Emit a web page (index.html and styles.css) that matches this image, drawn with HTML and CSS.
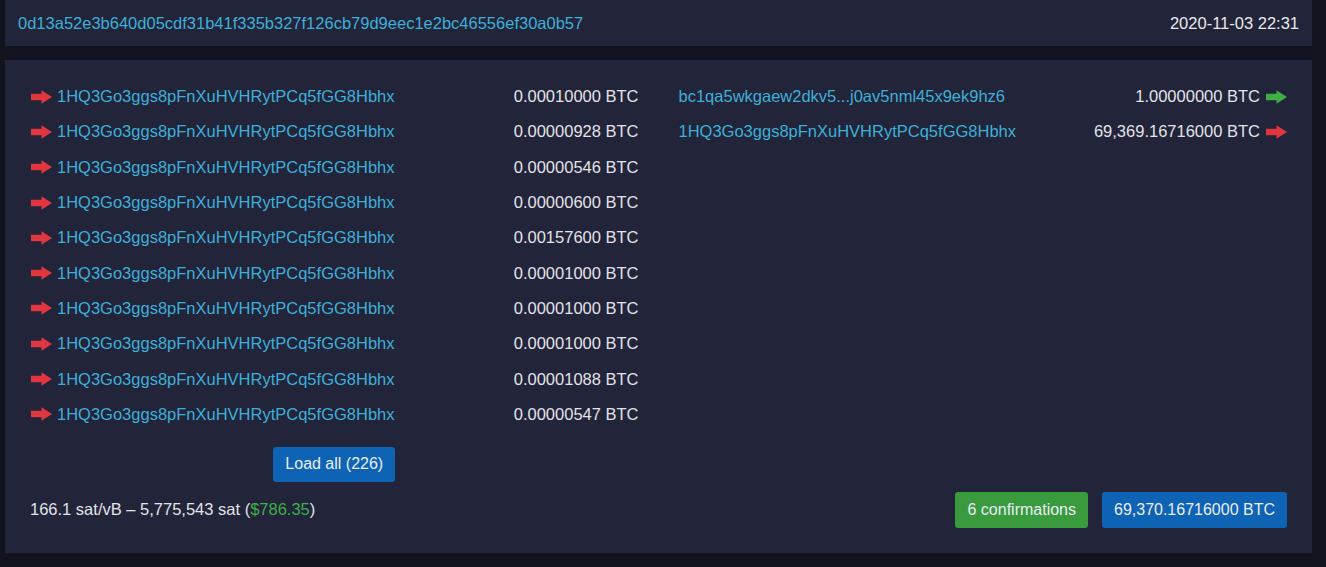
FILE: index.html
```html
<!DOCTYPE html>
<html>
<head>
  <link rel="stylesheet" href="styles.css">
</head>
<body>
  <div class="page">
    <div class="box header">
      <a class="link" href="#">0d13a52e3b640d05cdf31b41f335b327f126cb79d9eec1e2bc46556ef30a0b57</a>
      <span class="date">2020-11-03 22:31</span>
    </div>

    <div class="box tx">
      <div class="columns">
        <div class="col">
          <div class="row"><span class="addr"><svg class="arrow red" viewBox="0 0 22 14"><path d="M0 3.5h11V0l11 7-11 7v-3.5H0z"/></svg><a class="link" href="#">1HQ3Go3ggs8pFnXuHVHRytPCq5fGG8Hbhx</a></span><span class="amount">0.00010000 BTC</span></div>
          <div class="row"><span class="addr"><svg class="arrow red" viewBox="0 0 22 14"><path d="M0 3.5h11V0l11 7-11 7v-3.5H0z"/></svg><a class="link" href="#">1HQ3Go3ggs8pFnXuHVHRytPCq5fGG8Hbhx</a></span><span class="amount">0.00000928 BTC</span></div>
          <div class="row"><span class="addr"><svg class="arrow red" viewBox="0 0 22 14"><path d="M0 3.5h11V0l11 7-11 7v-3.5H0z"/></svg><a class="link" href="#">1HQ3Go3ggs8pFnXuHVHRytPCq5fGG8Hbhx</a></span><span class="amount">0.00000546 BTC</span></div>
          <div class="row"><span class="addr"><svg class="arrow red" viewBox="0 0 22 14"><path d="M0 3.5h11V0l11 7-11 7v-3.5H0z"/></svg><a class="link" href="#">1HQ3Go3ggs8pFnXuHVHRytPCq5fGG8Hbhx</a></span><span class="amount">0.00000600 BTC</span></div>
          <div class="row"><span class="addr"><svg class="arrow red" viewBox="0 0 22 14"><path d="M0 3.5h11V0l11 7-11 7v-3.5H0z"/></svg><a class="link" href="#">1HQ3Go3ggs8pFnXuHVHRytPCq5fGG8Hbhx</a></span><span class="amount">0.00157600 BTC</span></div>
          <div class="row"><span class="addr"><svg class="arrow red" viewBox="0 0 22 14"><path d="M0 3.5h11V0l11 7-11 7v-3.5H0z"/></svg><a class="link" href="#">1HQ3Go3ggs8pFnXuHVHRytPCq5fGG8Hbhx</a></span><span class="amount">0.00001000 BTC</span></div>
          <div class="row"><span class="addr"><svg class="arrow red" viewBox="0 0 22 14"><path d="M0 3.5h11V0l11 7-11 7v-3.5H0z"/></svg><a class="link" href="#">1HQ3Go3ggs8pFnXuHVHRytPCq5fGG8Hbhx</a></span><span class="amount">0.00001000 BTC</span></div>
          <div class="row"><span class="addr"><svg class="arrow red" viewBox="0 0 22 14"><path d="M0 3.5h11V0l11 7-11 7v-3.5H0z"/></svg><a class="link" href="#">1HQ3Go3ggs8pFnXuHVHRytPCq5fGG8Hbhx</a></span><span class="amount">0.00001000 BTC</span></div>
          <div class="row"><span class="addr"><svg class="arrow red" viewBox="0 0 22 14"><path d="M0 3.5h11V0l11 7-11 7v-3.5H0z"/></svg><a class="link" href="#">1HQ3Go3ggs8pFnXuHVHRytPCq5fGG8Hbhx</a></span><span class="amount">0.00001088 BTC</span></div>
          <div class="row"><span class="addr"><svg class="arrow red" viewBox="0 0 22 14"><path d="M0 3.5h11V0l11 7-11 7v-3.5H0z"/></svg><a class="link" href="#">1HQ3Go3ggs8pFnXuHVHRytPCq5fGG8Hbhx</a></span><span class="amount">0.00000547 BTC</span></div>
          <div class="load"><button class="btn">Load all (226)</button></div>
        </div>

        <div class="col">
          <div class="row"><a class="link" href="#">bc1qa5wkgaew2dkv5...j0av5nml45x9ek9hz6</a><span class="amount">1.00000000 BTC<svg class="arrow green" viewBox="0 0 22 14"><path d="M0 3.5h11V0l11 7-11 7v-3.5H0z"/></svg></span></div>
          <div class="row"><a class="link" href="#">1HQ3Go3ggs8pFnXuHVHRytPCq5fGG8Hbhx</a><span class="amount">69,369.16716000 BTC<svg class="arrow red" viewBox="0 0 22 14"><path d="M0 3.5h11V0l11 7-11 7v-3.5H0z"/></svg></span></div>
        </div>
      </div>

      <div class="footer">
        <span class="fee">166.1 sat/vB &ndash; 5,775,543 sat (<span class="usd">$786.35</span>)</span>
        <div class="badges">
          <span class="badge ok">6 confirmations</span>
          <span class="badge total">69,370.16716000 BTC</span>
        </div>
      </div>
    </div>
  </div>
</body>
</html>
```

FILE: styles.css
```css
body {
  margin: 0;
  background-color: #12131f;
  color: #e2e2e8;
  font-family: "Liberation Sans", Arial, sans-serif;
  font-size: 16.5px;
}

.page {
  padding: 0 14px 0 5px;
}

.box {
  background-color: #222439;
}

.link {
  color: #3eafd8;
  text-decoration: none;
}

.header {
  height: 46px;
  padding: 0 13px;
  display: flex;
  align-items: center;
  justify-content: space-between;
}

.date {
  color: #e8e8ee;
}

.tx {
  margin-top: 14px;
  padding: 19px 25px 25px;
}

.columns {
  display: grid;
  grid-template-columns: 1fr 1fr;
  column-gap: 40px;
}

.row {
  height: 35.3px;
  display: flex;
  align-items: center;
  justify-content: space-between;
}

.addr,
.amount {
  display: flex;
  align-items: center;
}

.arrow {
  width: 21px;
  height: 14px;
  flex-shrink: 0;
}

.addr .arrow {
  margin: 0 5px 0 1px;
}

.amount .arrow {
  margin-left: 6px;
}

.red {
  fill: #e0363f;
}

.green {
  fill: #3fae45;
}

.load {
  margin-top: 15px;
  display: flex;
  justify-content: center;
}

.btn {
  height: 35px;
  padding: 0 12px;
  border: none;
  border-radius: 3px;
  background-color: #0f63b5;
  color: #e8eef6;
  font-family: inherit;
  font-size: 16px;
}

.footer {
  margin-top: 10px;
  display: flex;
  align-items: center;
  justify-content: space-between;
}

.usd {
  color: #3fae4b;
}

.badges {
  display: flex;
  gap: 14px;
}

.badge {
  height: 36px;
  padding: 0 12px;
  border-radius: 3px;
  display: flex;
  align-items: center;
  color: #e8eef6;
  font-size: 16px;
}

.ok {
  background-color: #3a9a3e;
}

.total {
  background-color: #0f63b5;
}
```
